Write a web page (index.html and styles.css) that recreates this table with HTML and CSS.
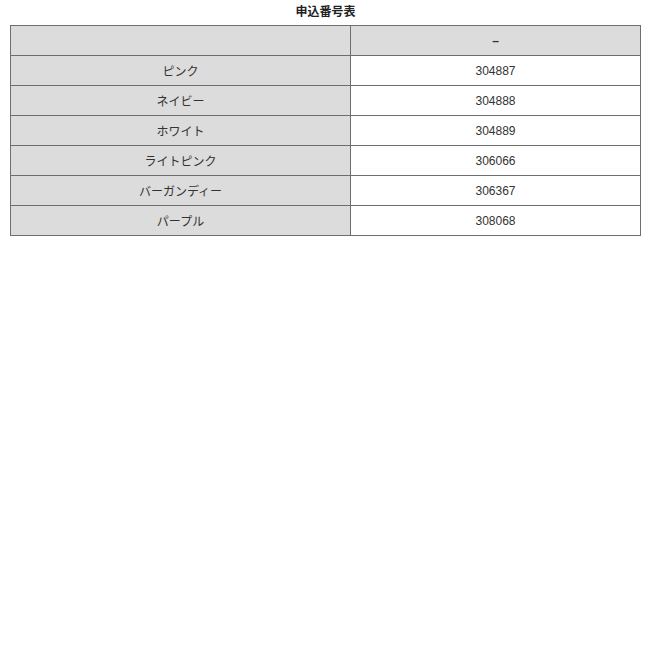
FILE: index.html
```html
<!DOCTYPE html>
<html lang="ja">
<head>
<meta charset="utf-8">
<link rel="stylesheet" href="styles.css">
</head>
<body>
<table class="order-table">
  <caption class="order-caption">申込番号表</caption>
  <tbody>
    <tr class="head-row"><td class="name"></td><td class="code dash">–</td></tr>
    <tr><td class="name">ピンク</td><td class="code">304887</td></tr>
    <tr><td class="name">ネイビー</td><td class="code">304888</td></tr>
    <tr><td class="name">ホワイト</td><td class="code">304889</td></tr>
    <tr><td class="name">ライトピンク</td><td class="code">306066</td></tr>
    <tr><td class="name">バーガンディー</td><td class="code">306367</td></tr>
    <tr><td class="name">パープル</td><td class="code">308068</td></tr>
  </tbody>
</table>
</body>
</html>
```
FILE: styles.css
```css
html, body {
  margin: 0;
  padding: 0;
  background: #fff;
}
body {
  padding: 0 10px;
  font-family: "Liberation Sans", "Noto Sans CJK JP", sans-serif;
  font-size: 12px;
  color: #333;
}
.order-table {
  width: 631px;
  border-collapse: collapse;
  margin-top: 0;
}
.order-caption {
  font-weight: bold;
  font-size: 12px;
  color: #222;
  padding: 5px 0 6px;
  line-height: 14px;
  text-align: center;
}
.order-table td {
  border: 1px solid #6e6e6e;
  height: 29px;
  padding: 0;
  text-align: center;
  vertical-align: middle;
}
.order-table td.name {
  width: 339px;
  background: #dcdcdc;
}
.order-table td.code {
  background: #fff;
}
.head-row td.code {
  background: #dcdcdc;
}
.dash {
  font-weight: bold;
}
```
